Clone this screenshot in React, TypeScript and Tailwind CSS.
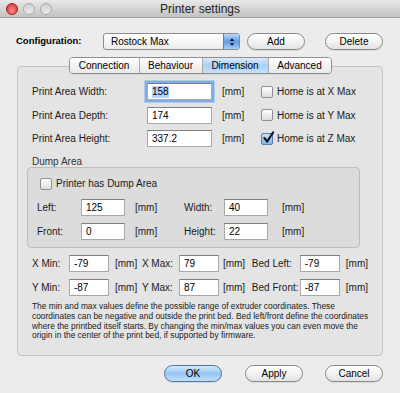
import React from 'react';

// Mac-style "Printer settings" dialog, Dimension tab

const Field: React.FC<{ value: string; w: string; focused?: boolean }> = ({ value, w, focused }) => (
    <div
        className={`${w} h-[17px] shrink-0 bg-white border border-[#a9a9a9] border-t-[#7f7f7f] flex items-center pl-[4px] text-[10px] text-black ${
            focused ? 'ring-[2.5px] ring-[#7eaee5]' : ''
        }`}
    >
        {focused ? <span className="bg-[#b4d5fe] leading-[12px]">{value}</span> : value}
    </div>
);

const Check: React.FC<{ checked?: boolean }> = ({ checked }) => (
    <div
        className={`relative w-[12px] h-[12px] shrink-0 rounded-[2px] border ${
            checked
                ? 'border-[#5a7bab] bg-linear-to-b from-[#c9e1f9] to-[#7db2ea]'
                : 'border-[#8f8f8f] bg-linear-to-b from-white to-[#dedede]'
        }`}
    >
        {checked && (
            <svg viewBox="0 0 14 14" className="absolute -top-[3px] left-[0px] w-[13px] h-[13px]">
                <path d="M2.5 7.5 L5.5 11.5 L12 1.5" fill="none" stroke="#111" strokeWidth="2.2" strokeLinecap="round" strokeLinejoin="round" />
            </svg>
        )}
    </div>
);

const PillButton: React.FC<{ label: string; primary?: boolean }> = ({ label, primary }) => (
    <div
        className={`w-[58px] h-[17px] rounded-full border flex items-center justify-center text-[10px] text-black shadow-[0_1px_0_rgba(0,0,0,0.08)] ${
            primary
                ? 'border-[#4f74a8] bg-linear-to-b from-[#d7eafc] via-[#95c6f5] to-[#bfe0fc]'
                : 'border-[#8a8a8a] bg-linear-to-b from-white via-[#f4f4f4] to-[#e2e2e2]'
        }`}
    >
        {label}
    </div>
);

const Light: React.FC<{ red?: boolean }> = ({ red }) => (
    <div
        className={`w-[12px] h-[12px] rounded-full border ${
            red
                ? 'border-[#a31a1a] bg-radial-[at_50%_70%] from-[#ff8a8a] to-[#d42a2a]'
                : 'border-[#a9a9a9] bg-linear-to-b from-[#cfcfcf] to-[#ececec]'
        }`}
    />
);

const Mm: React.FC<{ cls?: string }> = ({ cls = '' }) => <span className={`text-[10px] text-[#1a1a1a] ${cls}`}>[mm]</span>;

export default function App() {
    const tabs = ['Connection', 'Behaviour', 'Dimension', 'Advanced'];
    const tabWidths = ['w-[69px]', 'w-[63px]', 'w-[66px]', 'w-[63px]'];

    const areaRows = [
        { label: 'Print Area Width:', value: '158', home: 'Home is at X Max', focused: true, checked: false },
        { label: 'Print Area Depth:', value: '174', home: 'Home is at Y Max', focused: false, checked: false },
        { label: 'Print Area Height:', value: '337.2', home: 'Home is at Z Max', focused: false, checked: true },
    ];

    return (
        <div className="w-[400px] h-[393px] bg-[#ececec] flex flex-col font-['Liberation_Sans',Arial,sans-serif] text-black overflow-hidden">
            {/* title bar */}
            <div className="relative h-[18px] shrink-0 bg-linear-to-b from-[#e9e9e9] to-[#c2c2c2] border-b border-[#9d9d9d] flex items-center">
                <div className="flex items-center gap-[5px] pl-[6px]">
                    <Light red />
                    <Light />
                    <Light />
                </div>
                <div className="absolute inset-0 flex items-center justify-center text-[12px] text-[#222]">Printer settings</div>
            </div>

            {/* configuration row */}
            <div className="mt-[15px] flex items-center pl-[16px]">
                <span className="w-[87px] text-[9.5px] font-bold">Configuration:</span>
                <div className="w-[137px] h-[17px] flex rounded-[3px] border border-[#8c8c8c] bg-linear-to-b from-white to-[#ececec] overflow-hidden">
                    <span className="flex-1 flex items-center pl-[7px] text-[10px]">Rostock Max</span>
                    <div className="w-[16px] h-full bg-linear-to-b from-[#bcd9f8] via-[#5f9de6] to-[#a5cdf6] border-l border-[#5d7fae] flex items-center justify-center">
                        <svg viewBox="0 0 8 12" className="w-[6px] h-[10px]">
                            <path d="M4 1 L7 4.5 L1 4.5 Z" fill="#111" />
                            <path d="M4 11 L7 7.5 L1 7.5 Z" fill="#111" />
                        </svg>
                    </div>
                </div>
                <div className="ml-[7px]">
                    <PillButton label="Add" />
                </div>
                <div className="ml-[20px]">
                    <PillButton label="Delete" />
                </div>
            </div>

            {/* tabs */}
            <div className="relative z-10 mt-[7px] flex justify-center">
                <div className="flex h-[17px] rounded-[4px] border border-[#8e8e8e] overflow-hidden shadow-[0_1px_0_rgba(0,0,0,0.06)]">
                    {tabs.map((t, i) => (
                        <div
                            key={t}
                            className={`${tabWidths[i]} flex items-center justify-center text-[10px] ${i > 0 ? 'border-l border-[#a8a8a8]' : ''} ${
                                t === 'Dimension'
                                    ? 'bg-linear-to-b from-[#dbeafb] via-[#a9cff4] to-[#c6e1fa]'
                                    : 'bg-linear-to-b from-white to-[#e8e8e8]'
                            }`}
                        >
                            {t}
                        </div>
                    ))}
                </div>
            </div>

            {/* panel */}
            <div className="-mt-[8px] mx-[17px] h-[290px] rounded-[4px] border border-[#c3c3c3] bg-[#e4e4e4] pt-[16px] px-[14px] flex flex-col">
                <div className="flex flex-col gap-[6.5px]">
                    {areaRows.map((r) => (
                        <div key={r.label} className="flex items-center h-[17px]">
                            <span className="w-[115px] text-[10px] text-[#1a1a1a]">{r.label}</span>
                            <Field value={r.value} w="w-[65px]" focused={r.focused} />
                            <Mm cls="ml-[10px] w-[39px]" />
                            <Check checked={r.checked} />
                            <span className="ml-[4px] text-[10px] text-[#1a1a1a]">{r.home}</span>
                        </div>
                    ))}
                </div>

                <div className="mt-[9px] text-[10px] leading-[11px] text-[#333]">Dump Area</div>
                <div className="-ml-[5px] w-[333px] rounded-[4px] border border-[#bdbdbd] bg-[#dcdcdc] pt-[8px] pb-[7px] pl-[9px] flex flex-col">
                    <div className="flex items-center pl-[3px]">
                        <Check />
                        <span className="ml-[4px] text-[10px] text-[#1a1a1a]">Printer has Dump Area</span>
                    </div>
                    <div className="mt-[8px] flex flex-col gap-[7px]">
                        {[
                            ['Left:', '125', 'Width:', '40'],
                            ['Front:', '0', 'Height:', '22'],
                        ].map(([a, av, b, bv]) => (
                            <div key={a} className="flex items-center h-[17px]">
                                <span className="w-[44px] text-[10px] text-[#1a1a1a]">{a}</span>
                                <Field value={av} w="w-[44px]" />
                                <Mm cls="ml-[10px] w-[49px]" />
                                <span className="w-[40px] text-[10px] text-[#1a1a1a]">{b}</span>
                                <Field value={bv} w="w-[44px]" />
                                <Mm cls="ml-[14px]" />
                            </div>
                        ))}
                    </div>
                </div>

                <div className="mt-[7px] flex flex-col gap-[7px]">
                    {[
                        ['X Min:', '-79', 'X Max:', '79', 'Bed Left:', '-79'],
                        ['Y Min:', '-87', 'Y Max:', '87', 'Bed Front:', '-87'],
                    ].map(([a, av, b, bv, c, cv]) => (
                        <div key={a} className="flex items-center h-[17px] whitespace-nowrap">
                            <span className="w-[37px] text-[10px] text-[#1a1a1a]">{a}</span>
                            <Field value={av} w="w-[40px]" />
                            <Mm cls="ml-[6px] w-[27px]" />
                            <span className="w-[37px] text-[10px] text-[#1a1a1a]">{b}</span>
                            <Field value={bv} w="w-[40px]" />
                            <Mm cls="ml-[4px] w-[29px]" />
                            <span className="w-[48px] text-[10px] text-[#1a1a1a]">{c}</span>
                            <Field value={cv} w="w-[40px]" />
                            <Mm cls="ml-[6px]" />
                        </div>
                    ))}
                </div>

                <p className="mt-[6px] text-[8.4px] leading-[9.8px] text-[#1a1a1a] whitespace-nowrap">
                    The min and max values define the possible range of extruder coordinates. These
                    <br />
                    coordinates can be negative and outside the print bed. Bed left/front define the coordinates
                    <br />
                    where the printbed itself starts. By changing the min/max values you can even move the
                    <br />
                    origin in the center of the print bed, if supported by firmware.
                </p>
            </div>

            {/* bottom buttons */}
            <div className="mt-[9px] flex justify-end pr-[17px]">
                <PillButton label="OK" primary />
                <div className="ml-[23px]">
                    <PillButton label="Apply" />
                </div>
                <div className="ml-[22px]">
                    <PillButton label="Cancel" />
                </div>
            </div>
        </div>
    );
}
